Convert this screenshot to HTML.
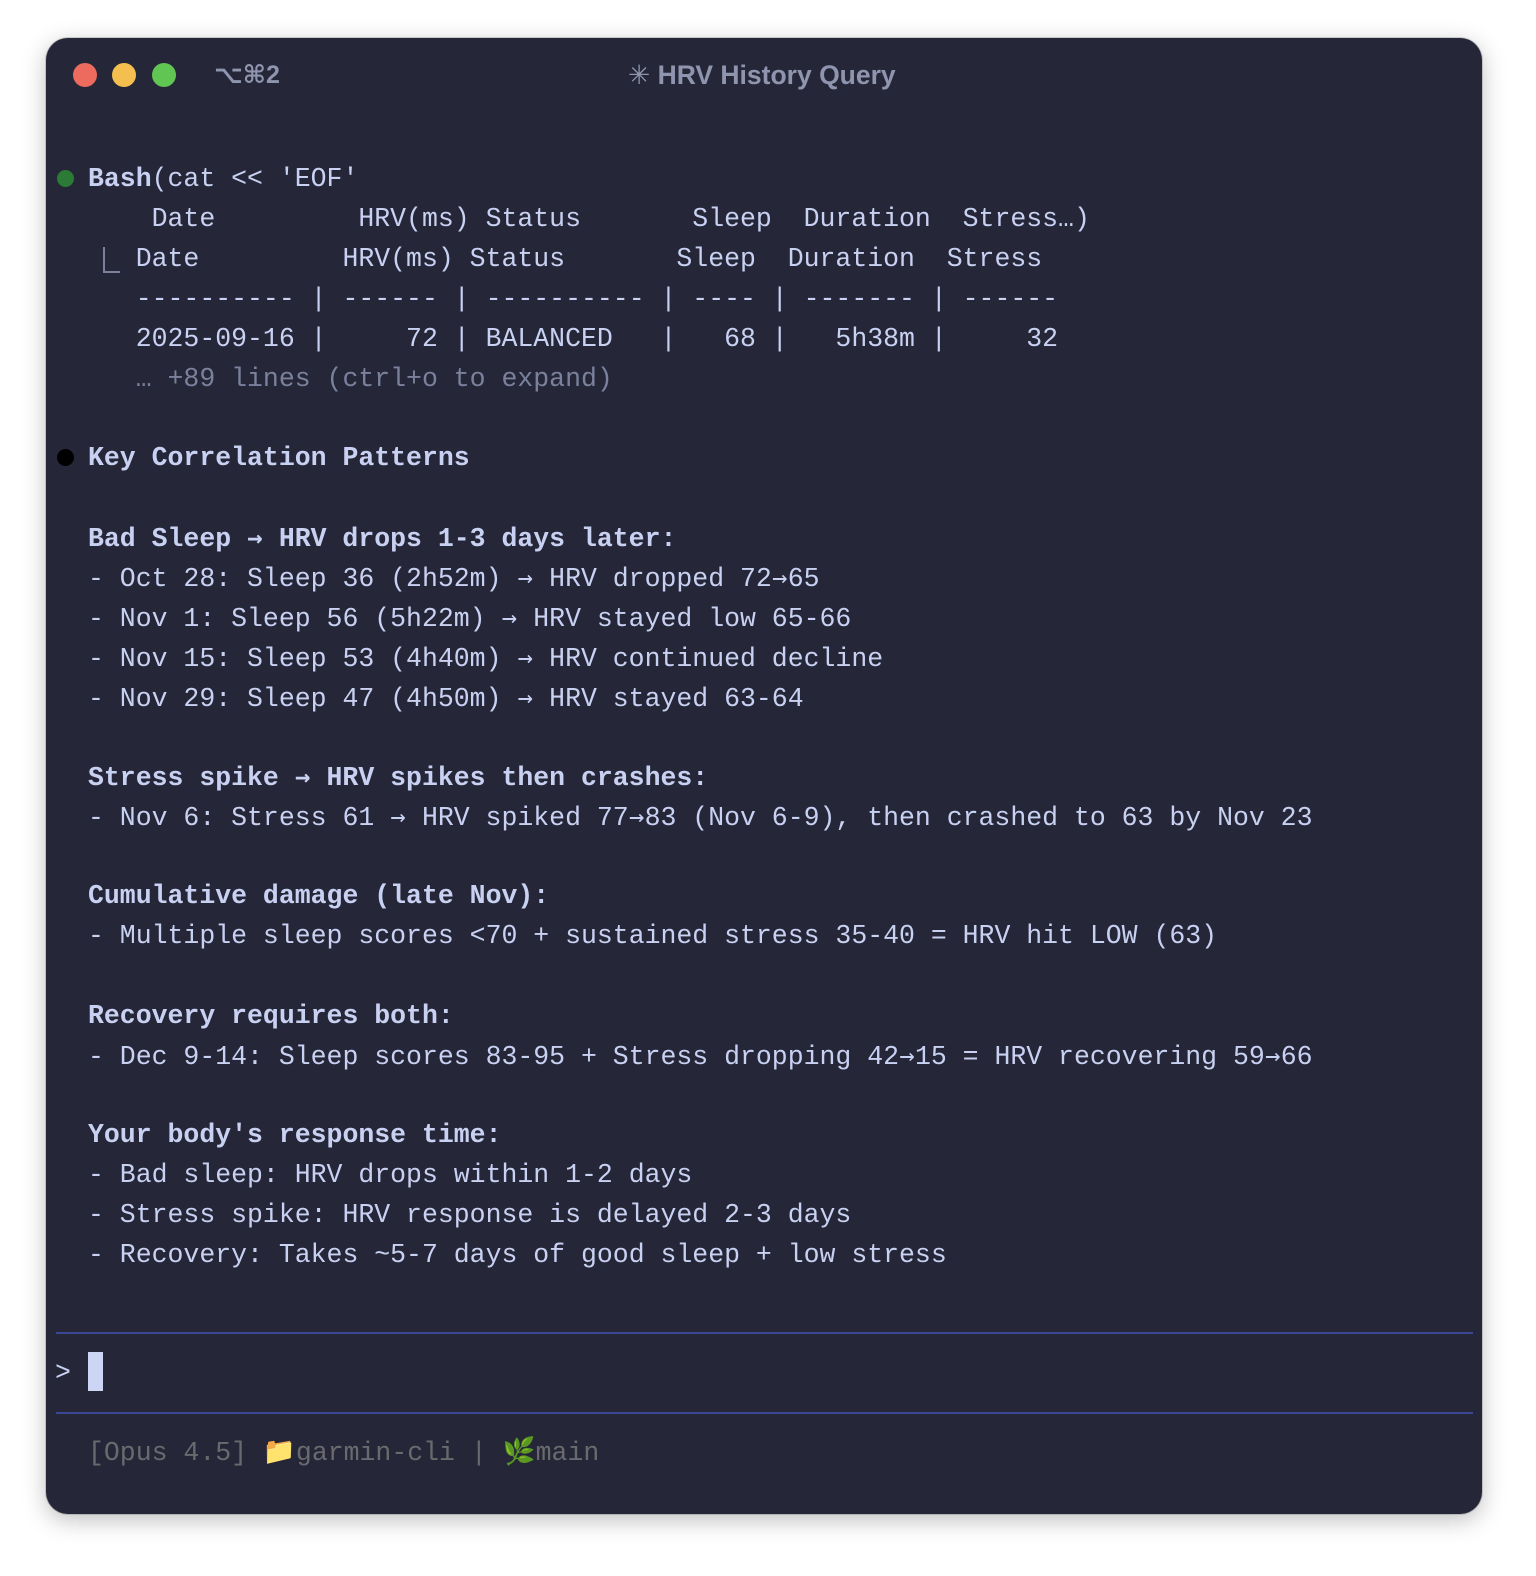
<!DOCTYPE html>
<html><head><meta charset="utf-8"><style>
html,body{margin:0;padding:0;background:#fff;width:1536px;height:1576px;overflow:hidden}
.win{position:absolute;left:46px;top:38px;width:1436px;height:1476px;background:#252738;border-radius:22px;box-shadow:0 6px 24px rgba(0,0,0,.25),0 0 0 1px rgba(0,0,0,.15)}
.dot{position:absolute;top:63px;width:24px;height:24px;border-radius:50%}
.t{position:absolute;font-family:"Liberation Sans","DejaVu Sans",sans-serif;font-weight:bold;color:#8f95ae;font-size:25px;line-height:30px;top:60px}
.l{position:absolute;left:88px;font-family:"Liberation Mono","DejaVu Sans Mono",monospace;font-size:26.5px;line-height:40px;height:40px;color:#c9d1f2;white-space:pre}
.b{font-weight:bold}
.dim{color:#7b819d}
.a{font-family:"DejaVu Sans Mono",monospace;font-size:25.5px;display:inline-block;width:15.9px;text-align:center;overflow:visible}
.bul{position:absolute;left:57px;width:17px;height:17px;border-radius:50%}
.sep{position:absolute;left:56px;width:1417px;height:2px;background:#3b4894}
</style></head><body>
<div class="win"></div>
<div class="dot" style="left:73px;background:#ec6a5e"></div>
<div class="dot" style="left:112px;background:#f4bf4f"></div>
<div class="dot" style="left:152px;background:#61c554"></div>
<div class="t" style="left:214px">⌥⌘2</div>
<div class="t" style="left:628px;font-size:26.5px">✳ HRV History Query</div>

<div class="bul" style="top:170px;background:#2b7a35"></div>
<div class="l" style="top:159px"><span class="b">Bash</span>(cat &lt;&lt; 'EOF'</div>
<div class="l" style="top:199px">    Date         HRV(ms) Status       Sleep  Duration  Stress…)</div>
<div style="position:absolute;left:103px;top:247px;width:15px;height:24px;border-left:2px solid #7b819d;border-bottom:2px solid #7b819d"></div>
<div class="l" style="top:239px">   Date         HRV(ms) Status       Sleep  Duration  Stress</div>
<div class="l" style="top:279px">   ---------- | ------ | ---------- | ---- | ------- | ------</div>
<div class="l" style="top:319px">   2025-09-16 |     72 | BALANCED   |   68 |   5h38m |     32</div>
<div class="l dim" style="top:359px">   … +89 lines (ctrl+o to expand)</div>

<div class="bul" style="top:449px;background:#000"></div>
<div class="l b" style="top:438px">Key Correlation Patterns</div>
<div class="l b" style="top:518px">Bad Sleep <span class="a">→</span> HRV drops 1-3 days later:</div>
<div class="l" style="top:558px">- Oct 28: Sleep 36 (2h52m) <span class="a">→</span> HRV dropped 72<span class="a">→</span>65</div>
<div class="l" style="top:598px">- Nov 1: Sleep 56 (5h22m) <span class="a">→</span> HRV stayed low 65-66</div>
<div class="l" style="top:638px">- Nov 15: Sleep 53 (4h40m) <span class="a">→</span> HRV continued decline</div>
<div class="l" style="top:678px">- Nov 29: Sleep 47 (4h50m) <span class="a">→</span> HRV stayed 63-64</div>
<div class="l b" style="top:757px">Stress spike <span class="a">→</span> HRV spikes then crashes:</div>
<div class="l" style="top:797px">- Nov 6: Stress 61 <span class="a">→</span> HRV spiked 77<span class="a">→</span>83 (Nov 6-9), then crashed to 63 by Nov 23</div>
<div class="l b" style="top:876px">Cumulative damage (late Nov):</div>
<div class="l" style="top:916px">- Multiple sleep scores &lt;70 + sustained stress 35-40 = HRV hit LOW (63)</div>
<div class="l b" style="top:996px">Recovery requires both:</div>
<div class="l" style="top:1036px">- Dec 9-14: Sleep scores 83-95 + Stress dropping 42<span class="a">→</span>15 = HRV recovering 59<span class="a">→</span>66</div>
<div class="l b" style="top:1115px">Your body's response time:</div>
<div class="l" style="top:1155px">- Bad sleep: HRV drops within 1-2 days</div>
<div class="l" style="top:1195px">- Stress spike: HRV response is delayed 2-3 days</div>
<div class="l" style="top:1235px">- Recovery: Takes ~5-7 days of good sleep + low stress</div>

<div class="sep" style="top:1332px"></div>
<div class="l" style="top:1353px;left:55px">&gt;</div>
<div style="position:absolute;left:88px;top:1352px;width:15px;height:39px;background:#cdd5f4"></div>
<div class="sep" style="top:1412px"></div>
<div class="l" style="top:1433px;color:#6a6a6e">[Opus 4.5] 📁garmin-cli | 🌿main</div>
</body></html>
